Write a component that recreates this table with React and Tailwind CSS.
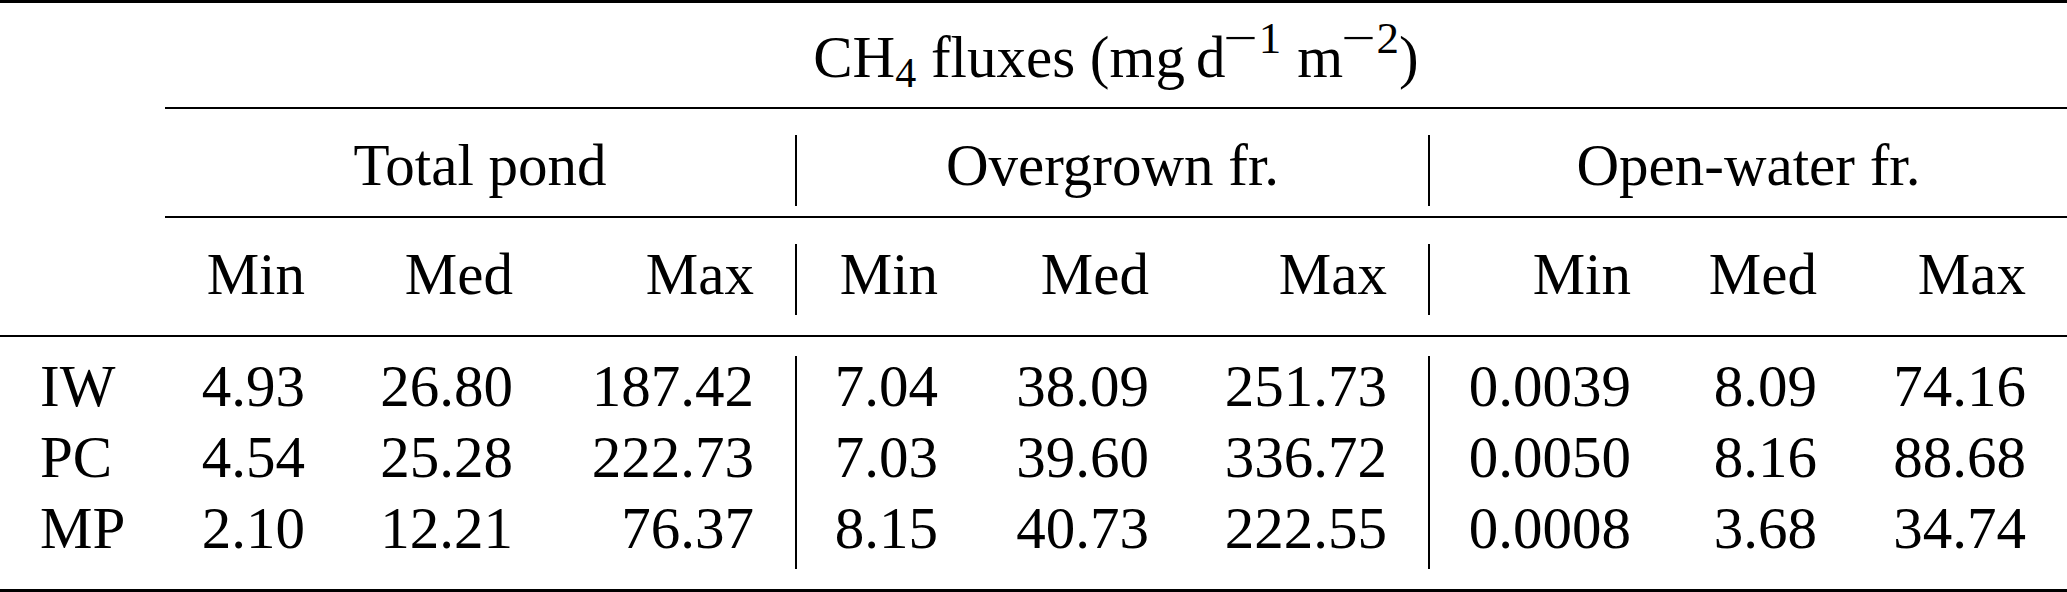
import clsx from 'clsx';

const grid =
  'grid grid-cols-[165px_181px_208px_241px_184px_211px_238px_244px_186px_209px]';

const rows = [
  ['IW', '4.93', '26.80', '187.42', '7.04', '38.09', '251.73', '0.0039', '8.09', '74.16'],
  ['PC', '4.54', '25.28', '222.73', '7.03', '39.60', '336.72', '0.0050', '8.16', '88.68'],
  ['MP', '2.10', '12.21', '76.37', '8.15', '40.73', '222.55', '0.0008', '3.68', '34.74'],
];

function Num({ children, bar }) {
  return (
    <div
      className={clsx(
        'h-[71px] pr-[41px] text-right leading-[60px] whitespace-nowrap',
        bar && 'border-l-2 border-black'
      )}
    >
      {children}
    </div>
  );
}

function Group({ children, bar }) {
  return (
    <div
      className={clsx(
        'col-span-3 h-[71px] text-center leading-[60px] whitespace-nowrap',
        bar && 'border-l-2 border-black'
      )}
    >
      {children}
    </div>
  );
}

export default function App() {
  return (
    <div className="w-[2067px] h-[592px] bg-white text-black text-[59px] font-['Liberation_Serif',_'Times_New_Roman',_serif] overflow-hidden">
      {/* top rule */}
      <div className="h-[3px] bg-black" />

      <div className={clsx(grid, 'mt-[24px]')}>
        <div />
        <div className="col-span-9 h-[71px] text-center leading-[60px] whitespace-nowrap">
          CH<sub className="text-[42px] -bottom-[10px]">4</sub> fluxes (mg
          <span className="ml-[11px]">d</span>
          <sup className="text-[45px] -top-[24px] ml-[3px]">
            <span className="inline-block scale-x-[1.35] mr-[5px]">−</span>1
          </sup>
          <span className="ml-[16px]">m</span>
          <sup className="text-[45px] -top-[24px] ml-[3px]">
            <span className="inline-block scale-x-[1.35] mr-[5px]">−</span>2
          </sup>
          )
        </div>
      </div>

      <div className="mt-[9px] ml-[165px] h-[2px] bg-black" />

      <div className={clsx(grid, 'mt-[26px]')}>
        <div />
        <Group>Total pond</Group>
        <Group bar>Overgrown fr.</Group>
        <Group bar>Open-water fr.</Group>
      </div>

      <div className="mt-[10px] ml-[165px] h-[2px] bg-black" />

      <div className={clsx(grid, 'mt-[26px]')}>
        <div />
        <Num>Min</Num>
        <Num>Med</Num>
        <Num>Max</Num>
        <Num bar>Min</Num>
        <Num>Med</Num>
        <Num>Max</Num>
        <Num bar>Min</Num>
        <Num>Med</Num>
        <Num>Max</Num>
      </div>

      {/* midrule */}
      <div className="mt-[20px] h-[2px] bg-black" />

      <div className="mt-[19px]">
        {rows.map((r) => (
          <div key={r[0]} className={grid}>
            <div className="h-[71px] pl-[40px] leading-[60px]">{r[0]}</div>
            {r.slice(1).map((v, i) => (
              <Num key={i} bar={i === 3 || i === 6}>
                {v}
              </Num>
            ))}
          </div>
        ))}
      </div>

      {/* bottom rule */}
      <div className="mt-[20px] h-[3px] bg-black" />
    </div>
  );
}
